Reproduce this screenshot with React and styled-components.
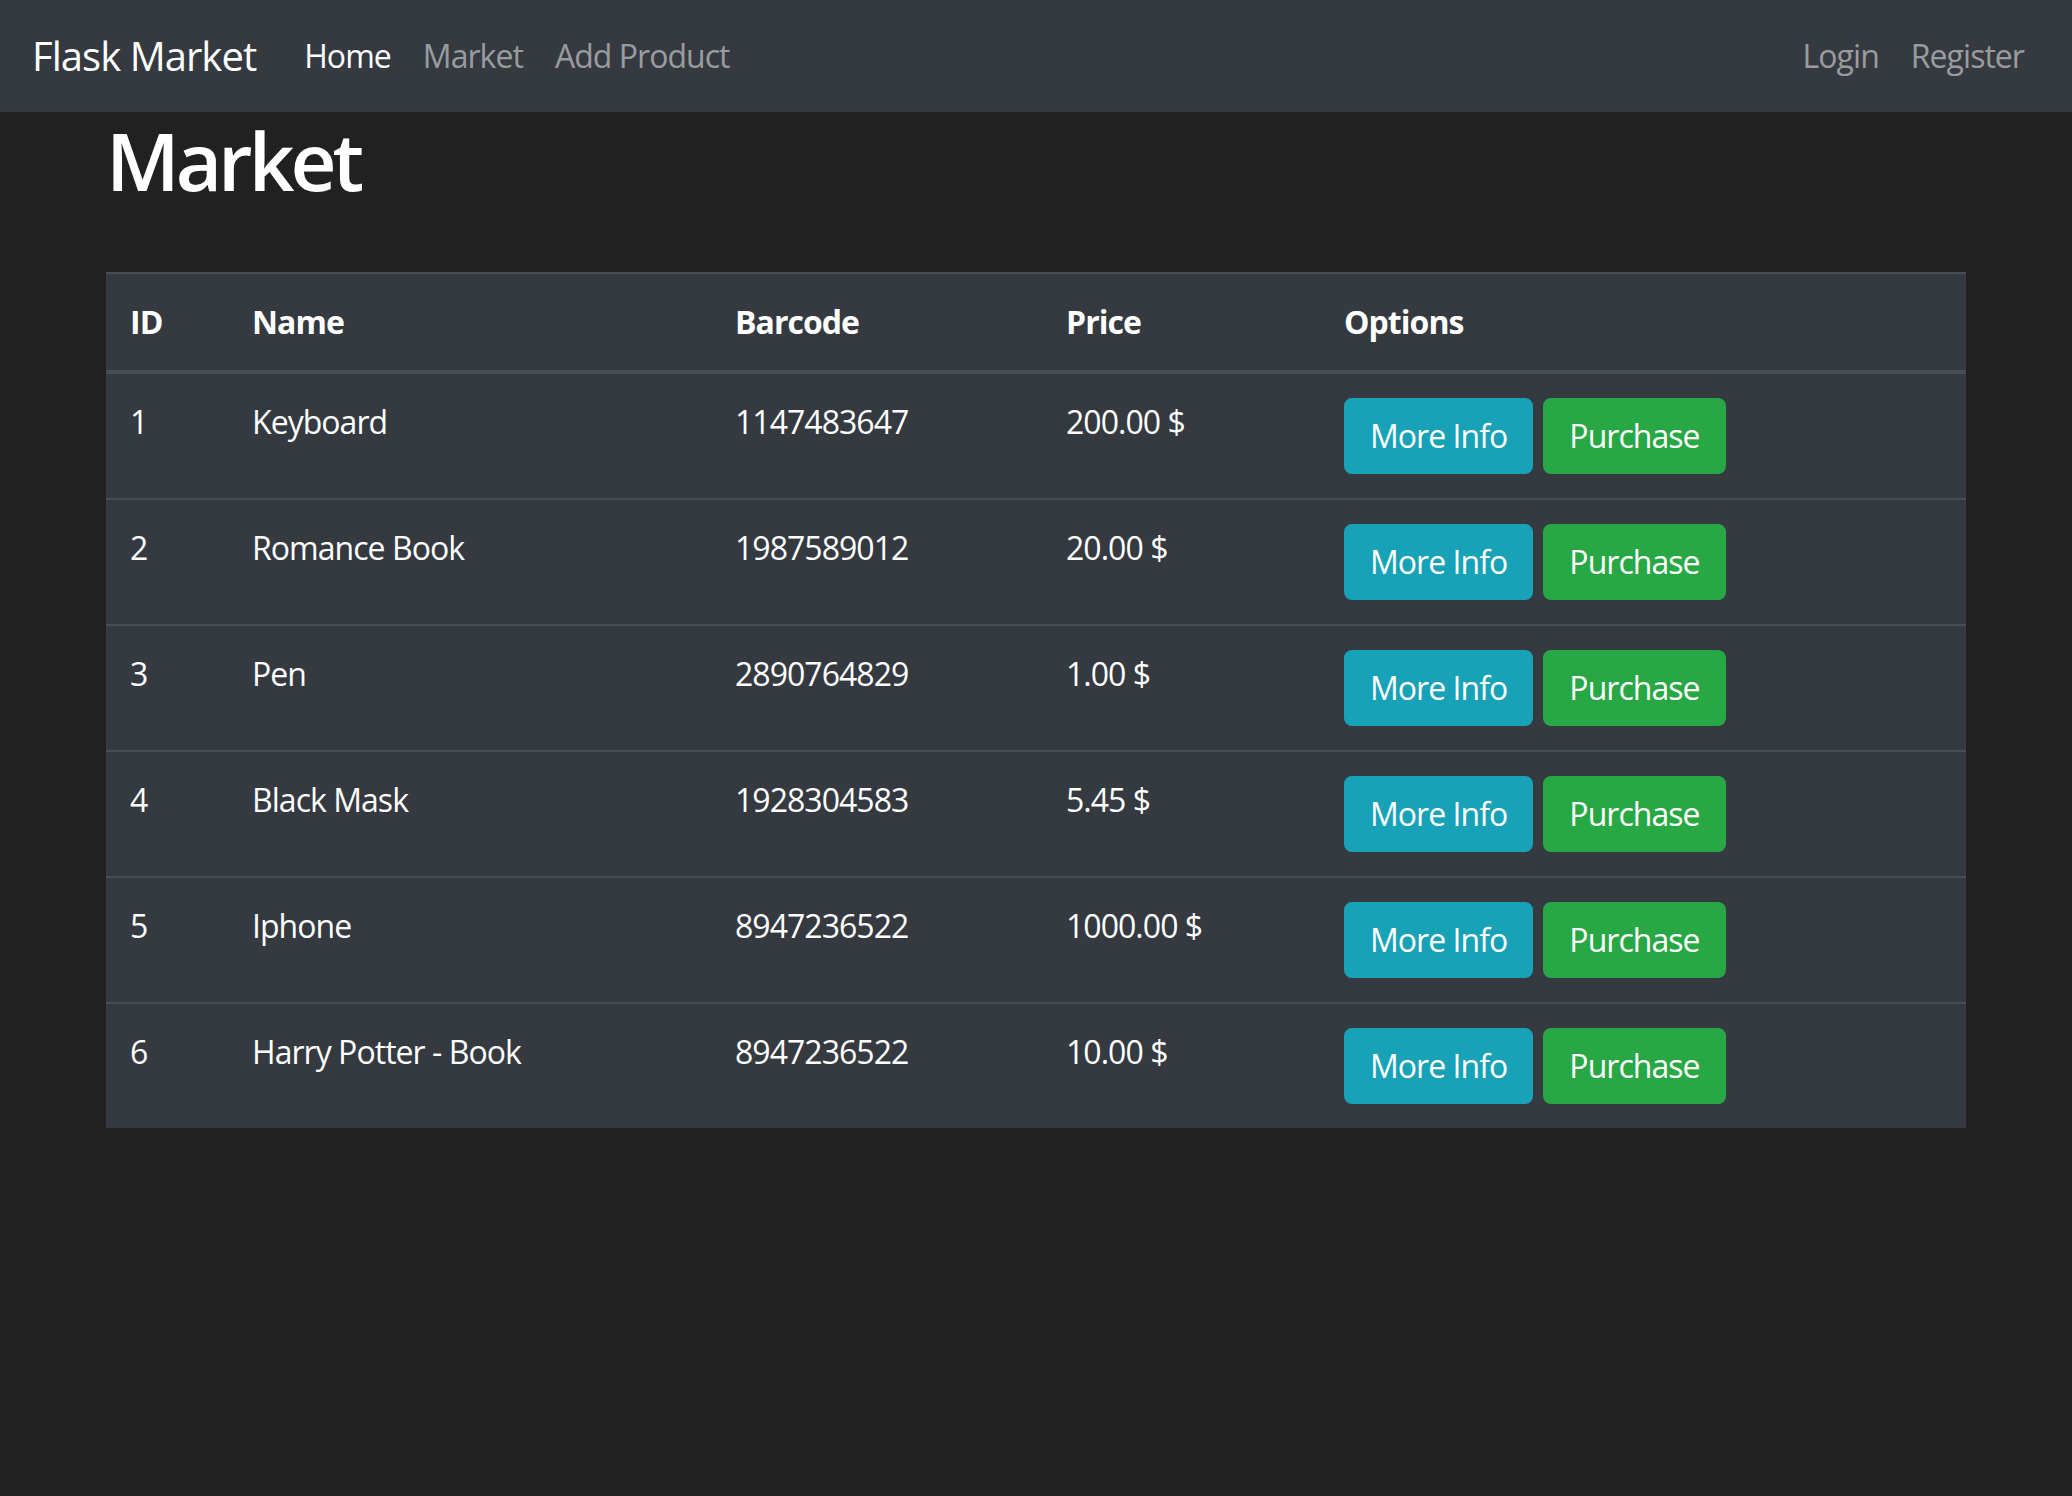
import styled, { createGlobalStyle } from 'styled-components'

const Global = createGlobalStyle`
  html, body {
    margin: 0;
    padding: 0;
  }
  body {
    background: #212121;
    color: #fff;
    font-family: "Segoe UI", "Open Sans", "Noto Sans", sans-serif;
    font-size: 32px;
    line-height: 1.5;
    letter-spacing: -0.03em;
  }
  * {
    box-sizing: border-box;
  }
`

const Nav = styled.nav`
  display: flex;
  align-items: center;
  background: #343a40;
  padding: 16px 32px;
`

const Brand = styled.a`
  color: #fff;
  font-size: 40px;
  line-height: 60px;
  padding: 10px 0;
  margin-right: 32px;
  text-decoration: none;
  white-space: nowrap;
`

const Links = styled.ul`
  display: flex;
  list-style: none;
  margin: 0;
  padding: 0;
  margin-left: ${({ $right }) => ($right ? 'auto' : '0')};
`

const Link = styled.a`
  display: block;
  padding: 16px 16px;
  line-height: 48px;
  color: ${({ $active }) => ($active ? '#fff' : 'rgba(255, 255, 255, 0.5)')};
  text-decoration: none;
  white-space: nowrap;
`

const Container = styled.main`
  width: 1920px;
  margin: 0 auto;
  padding: 0 30px;
`

const Title = styled.h1`
  margin: 0 0 64px 0;
  font-size: 80px;
  font-weight: 600;
  letter-spacing: -0.05em;
  line-height: 96px;
`

const Table = styled.table`
  width: 100%;
  table-layout: fixed;
  border-collapse: collapse;
  background: #343a40;
  color: #fff;
`

const Th = styled.th`
  text-align: left;
  vertical-align: bottom;
  padding: 24px;
  font-weight: 700;
  line-height: 48px;
  border-top: 2px solid #454d55;
  border-bottom: 4px solid #454d55;
  width: ${({ $w }) => $w || 'auto'};
`

const Td = styled.td`
  vertical-align: top;
  padding: 24px;
  line-height: 48px;
  border-top: 2px solid #454d55;
  white-space: nowrap;
`

const Options = styled.div`
  display: flex;
  gap: 10px;
`

const Button = styled.button`
  font: inherit;
  letter-spacing: inherit;
  color: #fff;
  background: ${({ $variant }) => ($variant === 'info' ? '#17a2b8' : '#28a745')};
  border: 2px solid ${({ $variant }) => ($variant === 'info' ? '#17a2b8' : '#28a745')};
  border-radius: 8px;
  padding: 12px 24px;
  line-height: 48px;
  cursor: pointer;
`

const items = [
  { id: 1, name: 'Keyboard', barcode: '1147483647', price: '200.00' },
  { id: 2, name: 'Romance Book', barcode: '1987589012', price: '20.00' },
  { id: 3, name: 'Pen', barcode: '2890764829', price: '1.00' },
  { id: 4, name: 'Black Mask', barcode: '1928304583', price: '5.45' },
  { id: 5, name: 'Iphone', barcode: '8947236522', price: '1000.00' },
  { id: 6, name: 'Harry Potter - Book', barcode: '8947236522', price: '10.00' },
]

export default function App() {
  return (
    <>
      <Global />
      <Nav>
        <Brand href="#">Flask Market</Brand>
        <Links>
          <li><Link href="#" $active>Home</Link></li>
          <li><Link href="#">Market</Link></li>
          <li><Link href="#">Add Product</Link></li>
        </Links>
        <Links $right>
          <li><Link href="#">Login</Link></li>
          <li><Link href="#">Register</Link></li>
        </Links>
      </Nav>
      <Container>
        <Title>Market</Title>
        <Table>
          <thead>
            <tr>
              <Th $w="122px">ID</Th>
              <Th $w="483px">Name</Th>
              <Th $w="331px">Barcode</Th>
              <Th $w="278px">Price</Th>
              <Th>Options</Th>
            </tr>
          </thead>
          <tbody>
            {items.map((item) => (
              <tr key={item.id}>
                <Td>{item.id}</Td>
                <Td>{item.name}</Td>
                <Td>{item.barcode}</Td>
                <Td>{item.price} $</Td>
                <Td>
                  <Options>
                    <Button $variant="info">More Info</Button>
                    <Button $variant="success">Purchase</Button>
                  </Options>
                </Td>
              </tr>
            ))}
          </tbody>
        </Table>
      </Container>
    </>
  )
}
